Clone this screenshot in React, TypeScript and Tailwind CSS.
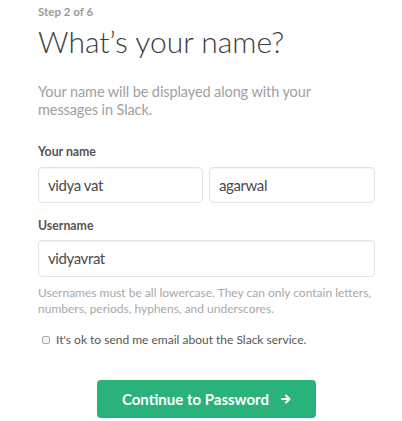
import React from "react";

export default function App() {
  return (
    <div
      className="w-[402px] h-[421px] bg-white overflow-hidden"
      style={{ fontFamily: "Lato, 'Noto Sans', sans-serif" }}
    >
      <div className="ml-[38px] w-[337px] pt-[5px]">
        <div className="text-[11.5px] font-bold text-[#9a9a9a] leading-[14px]">Step 2 of 6</div>
        <h1 className="mt-[4px] text-[30px] font-light text-[#3d3d3d] leading-[36px]">
          What’s your name?
        </h1>
        <p className="mt-[24px] w-[300px] text-[14.5px] text-[#a0a0a0] leading-[18px] tracking-[-0.1px]">
          Your name will be displayed along with your messages in Slack.
        </p>
        <div className="mt-[25px] text-[12.3px] font-bold text-[#555] leading-[16px]">Your name</div>
        <div className="mt-[7px] flex gap-[6px]">
          <div className="w-[165px] h-[36px] border border-[#e3e3e3] rounded-[4px] shadow-[inset_0_1px_1px_rgba(0,0,0,0.05)] flex items-center pl-[9px] text-[15px] tracking-[-0.4px] text-[#4a4a4a]">
            vidya vat
          </div>
          <div className="w-[166px] h-[36px] border border-[#e3e3e3] rounded-[4px] shadow-[inset_0_1px_1px_rgba(0,0,0,0.05)] flex items-center pl-[9px] text-[15px] tracking-[-0.4px] text-[#4a4a4a]">
            agarwal
          </div>
        </div>
        <div className="mt-[15px] text-[12.3px] font-bold text-[#555] leading-[16px]">Username</div>
        <div className="mt-[6px] w-[337px] h-[37px] border border-[#e3e3e3] rounded-[4px] shadow-[inset_0_1px_1px_rgba(0,0,0,0.05)] flex items-center pl-[9px] text-[15px] tracking-[-0.4px] text-[#4a4a4a]">
          vidyavrat
        </div>
        <p className="mt-[8px] text-[12px] text-[#a8a8a8] leading-[16px]">
          Usernames must be all lowercase. They can only contain letters, numbers, periods, hyphens, and underscores.
        </p>
        <div className="mt-[15px] flex items-center pl-[4px]">
          <div className="w-[8px] h-[8px] border border-[#aaa] rounded-[2px] bg-[#f2f2f2]" />
          <span className="ml-[6px] text-[12px] text-[#555] leading-[16px]">
            It's ok to send me email about the Slack service.
          </span>
        </div>
        <div className="mt-[32px] flex justify-center">
          <div className="w-[219px] h-[38px] rounded-[4px] bg-[#2ab27b] flex items-center justify-center text-white font-bold text-[15px]">
            <span>Continue to Password</span>
            <svg className="ml-[12px]" width="10" height="10" viewBox="0 0 10 10" fill="none" stroke="white" strokeWidth="2" strokeLinecap="round" strokeLinejoin="round">
              <path d="M1 5h7.5M5 1.5 8.5 5 5 8.5" />
            </svg>
          </div>
        </div>
      </div>
    </div>
  );
}
